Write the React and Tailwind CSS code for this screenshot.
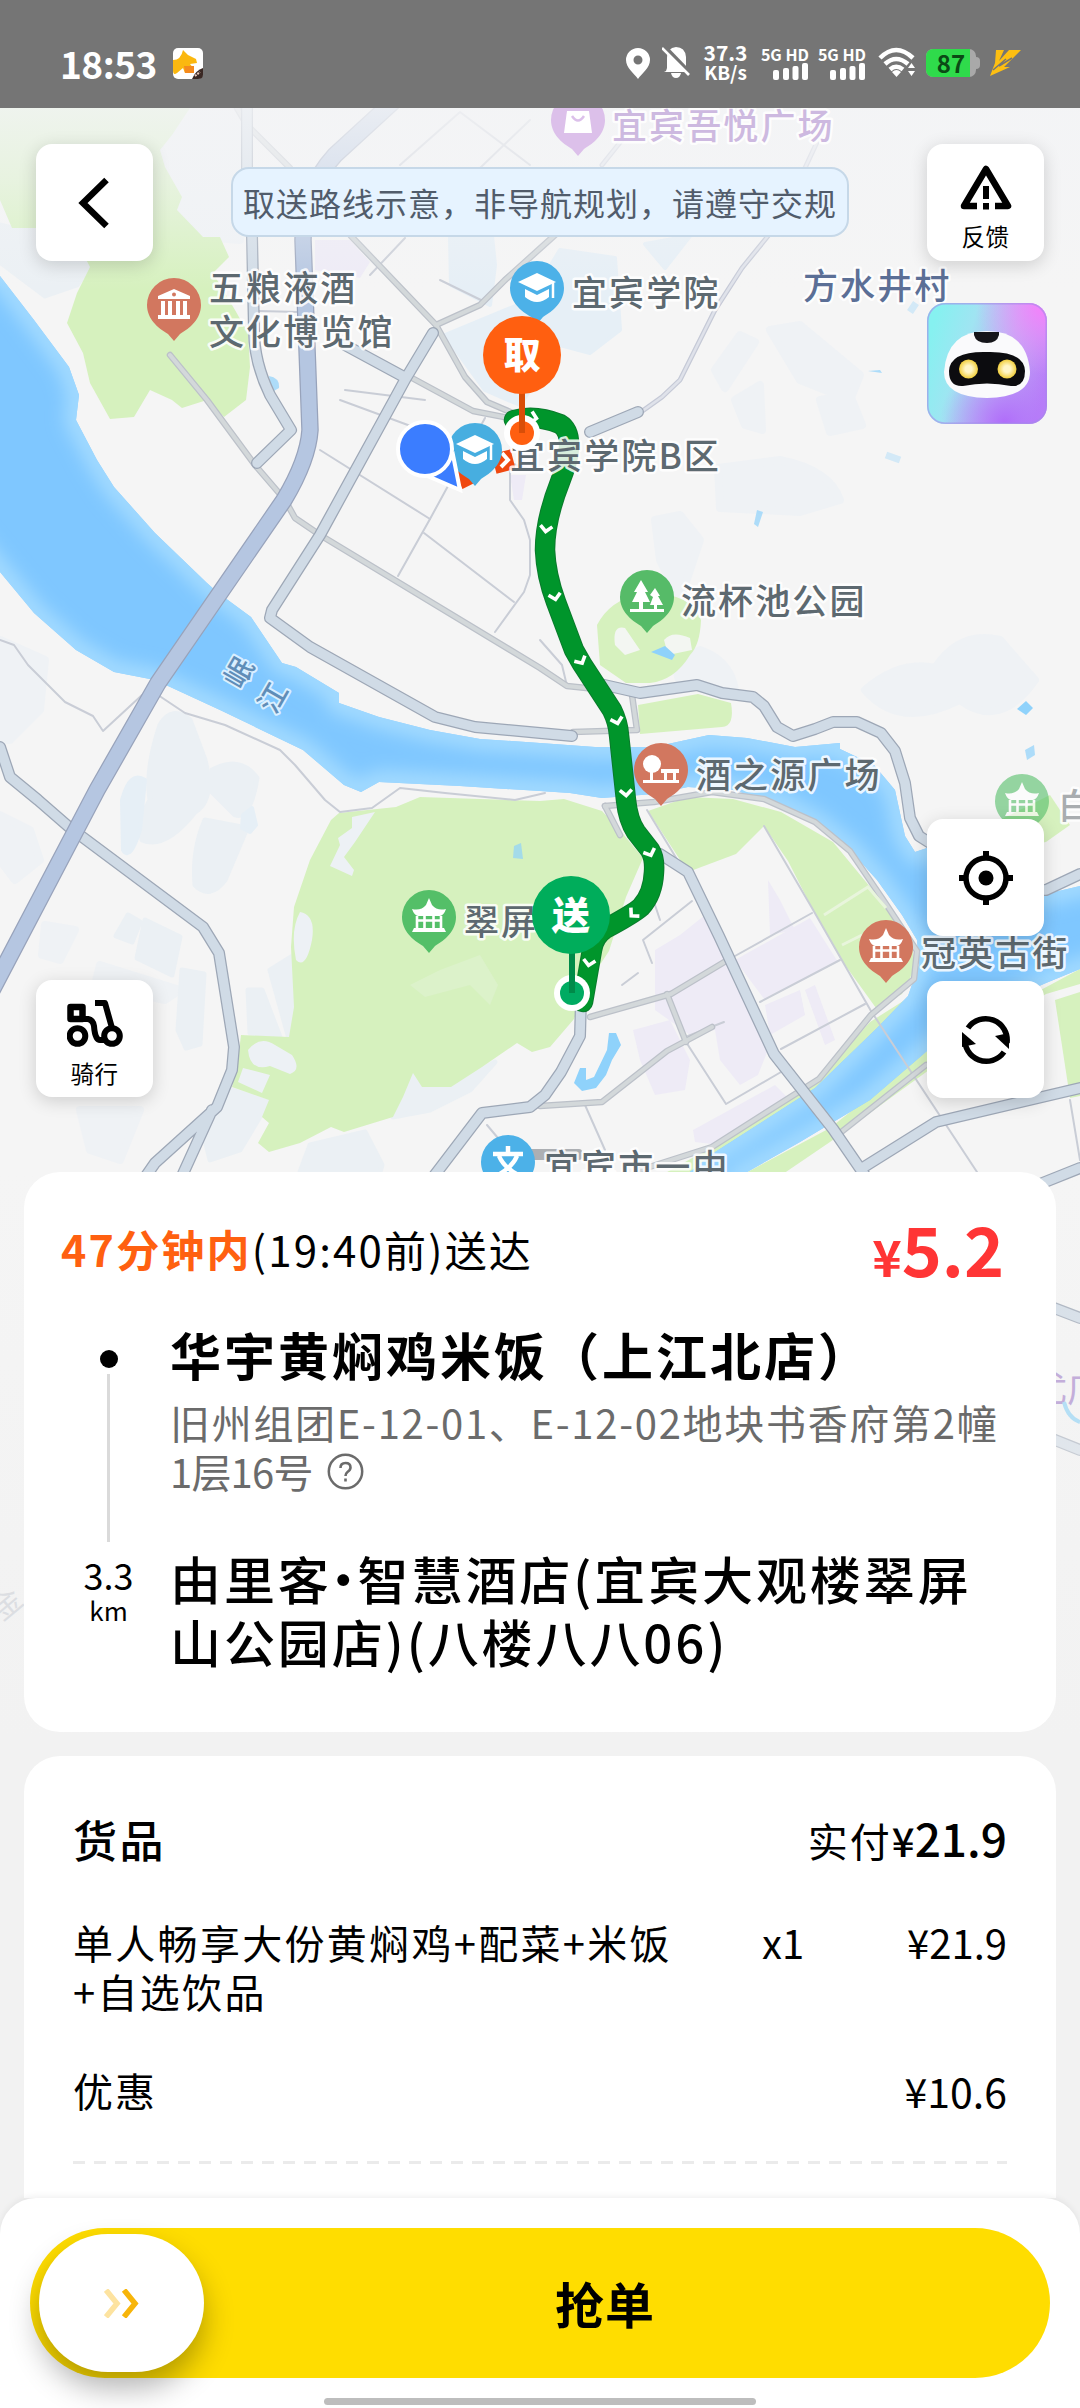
import React from 'react'

const RIVER =
  'M-60 220 L0 276 L34 320 L69 367 L79 395 L76 420 L97 460 L114 487 L155 533 L207 583 L217 592 L251 617 L282 663 L296 667 L339 693 L339 703 L379 717 L430 730 L480 739 L540 743 L595 747 L654 747 L709 735 L747 738 L795 747 L840 743 L840 749 L874 765 L895 790 L905 836 L915 852 L930 847 L985 885 L1046 894 L1080 886 L1140 870 L1140 950 L1080 969 L1046 983 L985 1010 L927 1051 L870 1100 L800 1142 L740 1176 L700 1230 L640 1210 L685 1176 L712 1154 L815 1088 L877 1028 L908 996 L919 965 L917 940 L902 915 L877 880 L850 850 L815 822 L781 804 L733 790 L688 787 L654 794 L602 798 L570 793 L540 791 L460 786 L379 782 L361 792 L344 785 L303 750 L220 710 L155 680 L114 672 L76 650 L34 613 L0 572 L-60 500 Z'

const ROUTE =
  'M514 420 Q535 414 560 424 Q570 430 569 448 Q568 462 560 482 Q545 520 545 550 Q546 575 556 602 L574 650 L582 664 L612 710 Q618 722 619 735 L626 800 Q628 820 636 832 L650 850 Q655 858 654 872 Q653 894 641 907 Q633 914 605 929 Q594 936 592 950 L583 1002'

const BLUE_ROAD = 'M395 100 L335 155 Q303 190 303 240 L310 430 Q308 460 284 500 L158 683 L97 790 L-10 994'

const greens = [
  'M0 108 L190 108 L172 135 L160 150 L165 167 L182 197 L177 210 L203 237 L220 237 L229 257 L213 273 L235 310 L248 333 L250 367 L246 400 L224 417 L207 400 L182 408 L172 400 L150 390 L134 417 L110 419 L90 383 L83 353 L67 323 L77 293 L90 267 L70 228 L12 228 L0 200 Z',
  'M339 813 L396 807 L420 797 L540 801 L564 799 L602 811 L619 829 L643 858 L626 897 L609 951 L588 983 L574 1019 L550 1047 L532 1052 L517 1043 L482 1067 L451 1087 L422 1087 L413 1073 L403 1097 L393 1117 L344 1132 L331 1127 L300 1143 L269 1152 L258 1143 L269 1123 L262 1117 L269 1100 L232 1087 L238 1060 L241 1035 L289 1037 L294 1007 L291 947 L294 907 L310 860 L331 820 Z',
  'M648 811 L688 797 L733 799 L781 812 L833 842 L871 888 L912 944 L915 968 L902 994 L876 1008 L840 958 L812 908 L788 861 L764 826 L736 854 L688 872 Z',
  'M638 705 L698 694 L731 703 Q735 726 722 727 L640 734 Z',
  'M600 665 L597 625 Q610 600 640 594 Q690 590 701 620 Q700 645 690 655 Q675 680 650 683 L626 683 Z',
  'M870 1022 L908 998 L874 1036 L815 1092 L712 1157 L685 1176 L660 1176 L712 1147 L815 1082 Z',
  'M740 1176 L830 1128 L927 1051 L1080 969 L1080 984 L1046 994 L940 1062 L830 1142 L780 1176 Z',
  'M1055 1000 L1080 992 L1080 1096 L1070 1098 Z',
  'M1000 820 L1050 795 L1070 825 L1046 842 L1000 850 Z',
]

const hazePatches = [
  'M12 228 L70 225 L90 267 L77 285 L45 296 L0 262 L0 225 Z',
  'M150 800 Q145 770 160 725 Q172 705 190 720 L205 760 Q215 800 195 812 Q165 850 142 840 Q138 820 150 800 Z',
  'M212 770 Q240 755 257 778 Q250 820 235 815 L210 790 Z',
  'M205 820 L247 828 L225 880 Q210 900 195 885 Q192 850 205 820 Z',
  'M128 915 L140 922 L132 942 L116 936 Z M145 920 L180 937 L172 975 L137 958 Z',
  'M182 970 L204 974 L200 1044 L186 1048 L178 1030 Z',
  'M248 990 L262 990 L280 1037 L250 1033 Z',
  'M270 970 L294 955 L294 1007 L288 1035 Z',
  'M232 1090 L268 1102 L258 1120 L240 1150 L210 1160 L205 1140 Z',
  'M310 1145 L365 1132 L382 1165 L380 1172 L300 1172 Z',
  'M413 1073 L422 1087 L451 1087 L495 1062 L470 1090 L430 1110 L393 1117 Z',
]

const faintPatches = [
  'M160 150 L200 108 L240 108 L240 240 L203 237 L177 210 L182 197 Z',
  'M0 640 L45 660 L40 710 L10 740 L0 740 Z',
  'M0 815 L30 830 L40 860 L15 880 L0 860 Z',
  'M45 925 L75 930 L60 960 L42 955 Z M100 965 L180 990 L165 1000 L95 985 Z',
  'M80 1110 L140 1110 L120 1160 L90 1150 Z',
  'M865 690 Q900 660 935 668 Q960 630 1000 640 L1035 680 Q1000 730 960 700 Q900 730 865 690 Z',
  'M700 650 Q730 660 735 690 L700 684 Q670 690 680 660 Z',
  'M655 520 L680 515 L700 540 L680 600 L660 560 Z',
  'M715 370 L740 335 L755 342 L725 388 Z',
  'M735 400 L760 385 L762 430 L745 425 Z',
  'M718 468 L780 460 Q830 470 840 500 L800 512 L720 508 Z',
  'M770 330 L800 325 L830 350 L860 375 L850 400 L800 380 Z',
  'M820 400 L850 395 L862 425 L830 432 Z',
]

const paleBlues = [
  'M445 335 L530 300 L560 250 L615 258 L620 330 L590 353 L560 345 L520 405 L485 390 Z',
  'M450 236 L492 236 L495 265 L490 305 L451 285 Z',
  'M645 244 L690 236 L665 268 Z',
  'M122 800 Q130 770 145 780 L140 830 Q130 862 123 850 Z',
  'M243 815 L252 808 L256 825 L250 832 L242 828 Z',
]

const lilacs = [
  'M315 240 L350 240 L370 262 L360 278 L315 270 Z',
  'M510 475 L526 475 L522 500 L514 500 Z',
  'M655 950 L680 935 L705 915 L722 950 L735 985 L760 1010 L770 1045 L758 1075 L740 1085 L720 1060 L715 1030 L690 1035 L655 1010 Z',
  'M735 960 L810 918 L838 962 L765 1000 Z',
  'M768 880 L780 900 L795 930 L770 935 Z',
  'M633 1030 L670 1020 L690 1060 L685 1090 L655 1095 L640 1060 Z',
  'M693 1130 L775 1085 L790 1100 L720 1145 L695 1142 Z',
  'M765 1005 L800 990 L805 1015 L770 1035 Z',
  'M805 990 L815 985 L835 1040 L825 1045 Z',
]

const lanes = [
  'M237 108 L247 125 L290 168',
  'M351 236 L436 325 L465 377 L487 402 L515 414',
  'M436 325 L480 305 L505 280 L555 235',
  'M412 378 L473 411 L514 419',
  'M170 355 L207 400 L255 465 L285 500 L295 518 L320 535 L540 668 L567 686 L605 690',
  'M573 732 L637 730 L632 695',
  'M605 806 L654 802 L712 792 L764 799 L815 822 L850 851 L884 901 L917 951 L914 979 L871 1015 L819 1079 L712 1147 L640 1170',
  'M605 806 L620 835',
  'M840 1133 L926 1065',
  'M540 1106 L602 1102 L667 1051 L712 1027',
  'M667 994 L686 1042',
  'M590 1017 L671 994 L726 961',
]

const paths = [
  'M258 311 L300 312',
  'M370 275 L405 238 M400 165 L460 112 L530 165 M480 168 L530 120',
  'M440 280 L485 302',
  'M340 400 L530 470 M320 450 L430 519 M425 400 L345 390',
  'M485 418 L430 519 L398 576',
  'M510 470 L510 500 L524 520 L530 540 L530 575 L524 592 L495 632',
  'M424 533 L514 602',
  'M540 640 L562 665 L567 686',
  'M647 810 L678 861 M735 956 L812 913 M760 1002 L840 960 M781 1049 L865 1004',
  'M764 826 L812 908 L871 1011 L977 1172',
  'M686 1042 L726 1104 L781 1072 M688 1036 L724 1022',
  'M652 963 L643 940 L692 901 M655 905 L660 920 M622 985 L638 973',
  'M0 640 L14 645 L28 665 L65 702 L93 716 L103 731 L142 695 L155 693 L185 713 L225 725 L280 750 L295 765 L325 800 L340 812 L372 808 L400 788 L445 793 L515 800 L545 793',
  'M585 1105 L605 1150 M487 1125 L508 1150 M1070 1100 L1080 1160',
]

const tracks = [
  'M768 236 L742 268 L715 310 L680 380 L662 397 L641 412',
  'M805 168 L818 140 M602 165 L622 140',
]

const avenues = [
  'M247 108 L247 168 L252 236 L254 330 Q254 362 270 395 L291 430 L257 463',
  'M345 345 L406 378 M433 333 L406 378 L394 400 L320 535 L272 610 L270 618 L310 647 L435 717 L475 727 L540 733 L572 736',
  'M600 684 L640 693 L697 685 L722 693 L753 697 L764 706 L777 727 L793 736 L815 729 L833 722 L857 722 L881 733 L895 751 L905 783 L910 818 L919 836 L960 862 L1010 890 L1046 890 L1080 874',
  'M0 747 L10 777 L38 800 L69 827 L203 927 L219 953 L234 1047 L232 1070 L217 1107 L155 1163 L146 1176 M212 1110 L182 1176',
  'M434 1176 L482 1113 L530 1107 L545 1095 L561 1072 L580 1036 L581 1000',
  'M660 854 L688 872 L719 936 L774 1054 L833 1129 L868 1180',
  'M864 1167 L936 1122 L1080 1088',
  'M1040 1184 L1080 1168',
  'M590 432 L638 412',
  'M1020 1295 L1080 1318 M1030 1430 L1080 1450',
]

const routeMarks = [
  [546, 529, 8], [555, 597, -12], [581, 661, -28], [617, 721, -15], [626, 793, -4],
  [650, 853, -22], [633, 914, 45], [589, 963, 10], [534, 418, -80],
]

const SchoolGlyph = () => (
  <>
    <path d="M0 -15 L19 -6 L0 3 L-19 -6 Z" />
    <path d="M-12 1 L0 7 L12 1 V9 Q0 19 -12 9 Z" />
    <path d="M16 -5 V10" stroke="#fff" strokeWidth="2.5" />
  </>
)

const PagodaGlyph = () => (
  <>
    <path d="M0 -19 L3 -12 Q8 -6 17 -8 Q15 -2 11 -1 H-11 Q-15 -2 -17 -8 Q-8 -6 -3 -12 Z" />
    <path d="M-16 15 V11 L-12 11 V-1 M16 15 V11 L12 11 V-1" fill="none" />
    <path d="M-12 -1 V12 M12 -1 V12 M-4.500 -1 V12 M4.500 -1 V12 M-12 3.500 H12" fill="none" stroke="#fff" strokeWidth="2.6" />
    <path d="M-15 11 H15 L17 15 H-17 Z" />
  </>
)

const MuseumGlyph = () => (
  <>
    <path d="M0 -16 L16 -9 V-6 H-16 V-9 Z M-13 -4 H-9 V10 H-13 Z M-6 -4 H-2 V10 H-6 Z M2 -4 H6 V10 H2 Z M9 -4 H13 V10 H9 Z M-16 10 H16 V14 H-16 Z" />
    <circle cx="0" cy="-10.500" r="2" fill="#d2775f" />
  </>
)

const TreesGlyph = () => (
  <>
    <path d="M-6 -17 L1 -5 H-2 L3 5 H-4 V12 H-8 V5 H-15 L-10 -5 H-13 Z" />
    <path d="M8 -9 L13 -1 H11 L16 8 H10 V12 H7 V8 H3 L6 0 L3 -2 Z M-17 12 H17 V15 H-17 Z" />
  </>
)

const PlazaGlyph = () => (
  <>
    <circle cx="-9" cy="-6" r="9" />
    <path d="M-11 0 H-8 V12 H-11 Z M-18 10 H18 V13 H-18 Z M0 -1 H18 V3 H0 Z M3 3 H6 V10 H3 Z M12 3 H15 V10 H12 Z" />
  </>
)

const BagGlyph = () => (
  <>
    <path d="M-11 -9 H11 L14 13 H-14 Z" />
    <path d="M-6 -4 Q0 5 6 -4" fill="none" stroke="#dcc0ea" strokeWidth="2.5" />
  </>
)

const WenGlyph = () => (
  <path d="M0 -16 V-9 M-15 -8 H15 M-9 -6 Q-4 6 12 14 M9 -6 Q4 6 -12 14" fill="none" stroke="#fff" strokeWidth="4.500" />
)

const pois = [
  { x: 174, y: 305, color: '#d2775f', Glyph: MuseumGlyph },
  { x: 537, y: 288, color: '#4cb1e8', Glyph: SchoolGlyph },
  { x: 475, y: 450, color: '#47aee0', Glyph: SchoolGlyph },
  { x: 647, y: 597, color: '#56bb68', Glyph: TreesGlyph },
  { x: 661, y: 770, color: '#d2775f', Glyph: PlazaGlyph },
  { x: 886, y: 947, color: '#d2775f', Glyph: PagodaGlyph },
  { x: 429, y: 917, color: '#54bf68', Glyph: PagodaGlyph },
  { x: 1022, y: 801, color: '#54bf68', Glyph: PagodaGlyph, opacity: 0.6 },
  { x: 508, y: 1162, color: '#4cb1e8', Glyph: WenGlyph },
  { x: 578, y: 120, color: '#dcc0ea', Glyph: BagGlyph },
]

const labels = [
  { x: 209, y: 301, text: '五粮液酒' },
  { x: 209, y: 345, text: '文化博览馆' },
  { x: 572, y: 306, text: '宜宾学院' },
  { x: 510, y: 469, text: '宜宾学院B区' },
  { x: 681, y: 614, text: '流杯池公园' },
  { x: 696, y: 788, text: '酒之源广场' },
  { x: 921, y: 966, text: '冠英古街' },
  { x: 464, y: 935, text: '翠屏' },
  { x: 544, y: 1180, text: '宜宾市一中' },
  { x: 1058, y: 819, text: '白', fill: '#a9adb0' },
  { x: 803, y: 299, text: '方水井村', fill: '#5b6f96' },
  { x: 612, y: 139, text: '宜宾吾悦广场', fill: '#cdb9e0' },
]

const MapCanvas = () => (
  <svg className="absolute inset-0 font-['Noto_Sans_CJK_SC',sans-serif]" width="1080" height="1760" viewBox="0 0 1080 1760">
    <defs>
      <linearGradient id="topFade" x1="0" y1="108" x2="0" y2="290" gradientUnits="userSpaceOnUse">
        <stop offset="0" stopColor="#f3f4f6" stopOpacity="0.85" />
        <stop offset="0.4" stopColor="#f3f4f6" stopOpacity="0.6" />
        <stop offset="1" stopColor="#f3f4f6" stopOpacity="0" />
      </linearGradient>
      <linearGradient id="bottomFade" x1="0" y1="1172" x2="0" y2="1740" gradientUnits="userSpaceOnUse">
        <stop offset="0" stopColor="#f2f2f2" stopOpacity="0" />
        <stop offset="1" stopColor="#f2f2f2" />
      </linearGradient>
      <clipPath id="riverClip">
        <path d={RIVER} />
      </clipPath>
      <filter id="soft" x="-10%" y="-10%" width="120%" height="120%">
        <feGaussianBlur stdDeviation="9" />
      </filter>
    </defs>
    <rect width="1080" height="1760" fill="#f5f5f5" />
    {faintPatches.map((d) => <path key={d} d={d} fill="#eff2f5" stroke="#eff2f5" strokeWidth="8" strokeLinejoin="round" />)}
    {hazePatches.map((d) => <path key={d} d={d} fill="#ebf0f4" stroke="#ebf0f4" strokeWidth="5" strokeLinejoin="round" />)}
    {paleBlues.map((d) => <path key={d} d={d} fill="#e6eff6" stroke="#e6eff6" strokeWidth="4" strokeLinejoin="round" />)}
    {lilacs.map((d) => <path key={d} d={d} fill="#eeebf6" />)}
    {greens.map((d) => <path key={d} d={d} fill="#d6f1be" />)}
    <path d="M352 817 L375 812 L355 842 L344 857 L354 870 L352 876 L330 866 L340 845 L338 838 L352 828 Z" fill="#edf1f5" />
    <path d="M300 912 Q316 915 312 940 Q306 970 296 960 Q290 930 300 912 Z M248 1050 Q260 1035 275 1045 L292 1055 Q302 1070 290 1074 L270 1066 Q250 1072 248 1050 Z M243 1068 L270 1075 L262 1093 L238 1082 Z" fill="#edf1f5" />
    <path d="M410 985 L440 970 L480 955 L498 985 L490 1005 L470 985 L425 997 Z" fill="#dcf2ca" />
    <path d="M615 645 Q612 625 625 628 L640 650 L625 655 Z M664 640 Q672 630 690 638 L692 650 L668 655 Z" fill="#f3f6f2" />
    <path d={RIVER} fill="#7fc7ff" />
    <g clipPath="url(#riverClip)">
      <path d={RIVER} filter="url(#soft)" fill="none" stroke="#a5dcff" strokeWidth="22" />
    </g>
    <g fill="#8fd2fb">
      <path d="M609 1033 L616 1033 L621 1045 L612 1060 L606 1075 L596 1088 L582 1091 L574 1083 L580 1068 L586 1068 L586 1080 L594 1077 L607 1050 Z" />
      <path d="M651 652 L665 646 L675 655 L672 660 Z M1017 709 L1026 701 L1033 708 L1026 715 Z" />
      <path d="M1025 750 L1034 745 L1035 755 L1027 760 Z M514 846 L521 843 L523 859 L513 858 Z M269 376 Q280 378 279 388 L272 392 Z M868 371 L880 370 L882 373 Z M757 510 L763 512 L758 527 L754 524 Z" opacity="0.7" />
      <path d="M886 455 L900 460 M910 312 L916 303" stroke="#d3e9f7" strokeWidth="7" />
    </g>
    <g fill="none" strokeLinejoin="round" strokeLinecap="round">
      {paths.map((d) => <path key={d} d={d} stroke="#c9cdd6" strokeWidth="2" />)}
      {tracks.map((d) => <path key={d} d={d} stroke="#c5c9d6" strokeWidth="5" />)}
      {tracks.map((d) => <path key={d} d={d} stroke="#dfe2ea" strokeWidth="2.5" />)}
      {lanes.map((d) => <path key={d} d={d} stroke="#bcc1c9" strokeWidth="6.5" />)}
      {lanes.map((d) => <path key={d} d={d} stroke="#d3d8da" strokeWidth="4" />)}
      {avenues.map((d) => <path key={d} d={d} stroke="#9da7b6" strokeWidth="12" />)}
      {avenues.map((d) => <path key={d} d={d} stroke="#d0dbe6" strokeWidth="9.5" />)}
      <path d={BLUE_ROAD} stroke="#98a3bb" strokeWidth="17.500" />
      <path d={BLUE_ROAD} stroke="#b5c6e1" strokeWidth="15" />
    </g>
    <path d="M824 915 L868 887 L886 908 M842 945 L862 935" stroke="#e8f5dc" strokeWidth="3" fill="none" />
    <rect x="500" y="1149" width="82" height="11" rx="3" fill="#7b8087" opacity="0.6" />
    <rect x="0" y="108" width="1080" height="190" fill="url(#topFade)" />
    <rect x="0" y="1172" width="1080" height="588" fill="url(#bottomFade)" />
    <text transform="translate(2 1622) rotate(-40)" fontSize="30" fill="#dcdee2">金</text>
    <text x="1031" y="1402" fontSize="36" fill="#c3aeda">尤广</text>
    <path d="M1064 1402 Q1068 1418 1080 1422" stroke="#b5dff5" strokeWidth="4" fill="none" />

    {/* rider to shop leg */}
    <path d="M458 480 L470 474 M494 464 L513 459" stroke="#f0480f" strokeWidth="20" />
    <path d="M502 453 L508 460 L501 467" stroke="#fff" strokeWidth="4" fill="none" />

    {/* shop to customer leg */}
    <path d={ROUTE} fill="none" stroke="#0a7a2c" strokeWidth="20.5" strokeLinejoin="round" strokeLinecap="round" />
    <path d={ROUTE} fill="none" stroke="#00952b" strokeWidth="18.5" strokeLinejoin="round" strokeLinecap="round" />
    {routeMarks.map(([x, y, r]) => (
      <path key={y} transform={`translate(${x} ${y}) rotate(${r})`} d="M-6 -3 L0 2.5 L6 -3" fill="none" stroke="#fff" strokeWidth="3.6" />
    ))}

    {pois.map(({ x, y, color, Glyph, opacity = 1 }) => (
      <g key={`${x}-${y}`} transform={`translate(${x} ${y})`} opacity={opacity}>
        <path d="M-27 0 A27 27 0 1 1 27 0 C27 14 16 23 6 29 L0 36 L-6 29 C-16 23 -27 14 -27 0 Z" fill={color} />
        <g fill="#fff"><Glyph /></g>
      </g>
    ))}

    <g fontSize="35" fontWeight="500" letterSpacing="2.1" stroke="#fff" strokeWidth="5" strokeLinejoin="round" paintOrder="stroke">
      {labels.map(({ x, y, text, fill = '#5d6970' }) => (
        <text key={text} x={x} y={y} fill={fill} strokeOpacity="0.85">{text}</text>
      ))}
      <g fontSize="29" letterSpacing="0" fill="#5f8db8" stroke="#d9efff" strokeWidth="4" textAnchor="middle">
        <text transform="translate(248 678) rotate(-60)">岷</text>
        <text transform="translate(282 703) rotate(-60)">江</text>
      </g>
    </g>

    {/* rider */}
    <g fill="#3b7dff" stroke="#fff" strokeWidth="4">
      <path d="M430 477 L453 455 L460 490 Z" />
      <circle cx="425" cy="449" r="27" />
    </g>

    {/* pickup pin */}
    <circle cx="522" cy="433" r="18" fill="#fff" />
    <circle cx="522" cy="433" r="12" fill="#ff5f10" />
    <path d="M522 390 V433" stroke="#d94e08" strokeWidth="6" />
    <circle cx="522" cy="355" r="39" fill="#ff5f10" />
    <text x="522" y="369" fontSize="37" fontWeight="900" fill="#fff" textAnchor="middle">取</text>

    {/* delivery pin */}
    <circle cx="572" cy="993" r="18" fill="#fff" />
    <circle cx="572" cy="993" r="12" fill="#00ab62" />
    <path d="M572 950 V993" stroke="#008a49" strokeWidth="6" />
    <circle cx="571" cy="915" r="39" fill="#00ad5b" />
    <text x="571" y="929" fontSize="38" fontWeight="900" fill="#fff" textAnchor="middle">送</text>
  </svg>
)

const Signal = () => (
  <div className="flex w-12 flex-col items-end">
    <span className="text-[16px] font-bold leading-[18px] whitespace-nowrap">5G HD</span>
    <svg width="36" height="17" viewBox="0 0 36 17" fill="#fff">
      <rect x="0" y="7" width="6" height="10" rx="2" />
      <rect x="10" y="5" width="6" height="12" rx="2" />
      <rect x="19.500" y="3" width="6" height="14" rx="2" />
      <rect x="29" y="0" width="6" height="17" rx="2" />
    </svg>
  </div>
)

const StatusBar = () => (
  <header className="relative flex h-[108px] shrink-0 items-start justify-between bg-[#757575] pt-[43px] pr-[59px] pl-[60px] text-white">
    <div className="flex items-center">
      <span className="w-[113px] text-[37px] leading-[40px] font-bold tracking-[-0.5px]">18:53</span>
      <svg width="30" height="31" viewBox="0 0 30 31">
        <rect width="30" height="31" rx="5" fill="#fff" />
        <path d="M0 12 Q8 12 10 2 L15 7 L23 11 L24 15 L17 16 L21 21 L20 25 H12 L10 20 L4 25 Q0 28 0 22 Z" fill="#fbb80f" />
        <path d="M11 18 H21 V25 H12 Z" fill="#f58a1d" />
        <path d="M30 20 V27 Q30 31 25 31 H19 Q23 22 30 20 Z" fill="#3a2824" />
        <path d="M22 28 L27 24" stroke="#e9c7b8" strokeWidth="2" strokeDasharray="2 1" />
      </svg>
    </div>
    <div className="flex items-center">
      <svg width="24" height="31" viewBox="0 0 24 31" className="mt-[1px]">
        <path fillRule="evenodd" d="M12 0 A12 12 0 0 1 24 12 C24 20 16 25 12 31 C8 25 0 20 0 12 A12 12 0 0 1 12 0 Z M12 7.500 A4.500 4.500 0 1 0 12 16.500 A4.500 4.500 0 1 0 12 7.500 Z" fill="#fff" />
      </svg>
      <svg width="28" height="31" viewBox="0 0 28 31" className="ml-3">
        <path d="M4 24 L5 21 V11 Q5 1 14 0 Q23 0 24 10 V21 L26 25 H2 Z M9 26 H19 Q18 31 14 31 Q10 31 9 26 Z" fill="#fff" />
        <path d="M2 -1 L29 27" stroke="#757575" strokeWidth="4" />
        <path d="M0 1 L27 28" stroke="#fff" strokeWidth="2.6" />
      </svg>
      <div className="ml-3.5 flex w-[43px] flex-col items-center text-[21px] leading-[19px] font-bold">
        <span>37.3</span>
        <span className="text-[19px] leading-[20px]">KB/s</span>
      </div>
      <div className="ml-3.5 flex gap-[9px]">
        <Signal />
        <Signal />
      </div>
      <svg width="38" height="31" viewBox="0 0 38 31" className="ml-3" fill="none" stroke="#fff" strokeWidth="4.500">
        <path d="M2 11 Q18 -5 35 11 M7 17 Q18 7 30 17 M12 22.500 Q18 17 25 22.500" />
        <path d="M18.500 30 L14 25 Q18.500 21 23 25 Z" fill="#fff" stroke="none" />
        <path d="M30 21 L33.500 16 L37 21 Z M30 24 L33.500 29 L37 24 Z" fill="#fff" stroke="none" />
      </svg>
      <div className="ml-2.5 flex items-center">
        <div className="flex h-[28px] w-[50px] items-center rounded-[7px] bg-[#a9a9a9]">
          <div className="flex h-[28px] w-[44px] items-center justify-center rounded-l-[7px] bg-[#2fdb4b] pl-1.5 text-[24px] leading-none font-bold text-[#0b4a15]">87</div>
        </div>
        <div className="h-3 w-1 rounded-r-sm bg-[#a9a9a9]" />
      </div>
      <svg width="31" height="26" viewBox="0 0 31 26" className="ml-2.5" fill="#fdbf12">
        <path d="M6 0 H14 L9 11 L19 0 H31 L14 17 H20 L0 26 L5 13 Z" />
        <path d="M3 20 L16 9 M9 16 L22 8" stroke="#757575" strokeWidth="1.500" />
      </svg>
    </div>
  </header>
)

const MapButton = ({ children }) => (
  <button className="flex h-[117px] w-[117px] flex-col items-center justify-center rounded-2xl bg-white text-black shadow-[0_4px_18px_rgba(0,0,0,0.16)]">
    {children}
  </button>
)

const ButtonLabel = ({ children }) => (
  <span className="mt-[11px] mb-[-10px] text-[23.5px] leading-[30px] tracking-[0.5px]">{children}</span>
)

const BackIcon = () => (
  <svg width="34" height="54" viewBox="0 0 34 54" className="mr-1">
    <path d="M30.500 4 L7 27 L30.500 50" fill="none" stroke="#000" strokeWidth="6.500" />
  </svg>
)

const ScooterIcon = () => (
  <svg width="56" height="48" viewBox="0 0 56 48" fill="none" stroke="#000" strokeWidth="6">
    <rect x="3.500" y="8" width="12" height="12" strokeWidth="6.500" strokeLinejoin="round" />
    <circle cx="10.500" cy="37" r="7.800" />
    <circle cx="45" cy="37" r="7.800" />
    <path d="M16 20 H21 Q26 21 27 27 Q28 41 33 41 H38" strokeLinejoin="round" />
    <path d="M28 4 H38 L45 29" strokeLinejoin="round" />
  </svg>
)

const WarningIcon = () => (
  <svg width="52" height="45" viewBox="0 0 52 45" fill="none" stroke="#000" strokeWidth="6.500" strokeLinejoin="round">
    <path d="M17 41 H4 L26 4 L48 41 H35" strokeLinecap="butt" />
    <path d="M26 21 V34 M26 38 V44.500" strokeWidth="6" />
  </svg>
)

const LocateIcon = () => (
  <svg width="54" height="54" viewBox="0 0 54 54" fill="none" stroke="#000">
    <circle cx="27" cy="27" r="20" strokeWidth="5.500" />
    <circle cx="27" cy="27" r="7.500" fill="#000" stroke="none" />
    <path d="M27 0 V8 M27 46 V54 M0 27 H8 M46 27 H54" strokeWidth="6" />
  </svg>
)

const RefreshIcon = () => (
  <svg width="50" height="50" viewBox="0 0 50 50">
    <path d="M7 13 A21.500 21.500 0 0 1 46 28" fill="none" stroke="#000" strokeWidth="5.500" />
    <path d="M43 37 A21.500 21.500 0 0 1 4 22" fill="none" stroke="#000" strokeWidth="5.500" />
    <path d="M34 21 L48 18 L48 34 Z" />
    <path d="M15 29 L1 17 L1 32 Z" />
  </svg>
)

const RobotButton = () => (
  <button className="mt-[42px] h-[120px] w-[117px]">
    <svg width="120" height="121" viewBox="0 0 120 121">
      <defs>
        <linearGradient id="bot" x1="0" y1="0.350" x2="1" y2="0.650">
          <stop offset="0" stopColor="#86f1f0" />
          <stop offset="0.300" stopColor="#a0e4f2" />
          <stop offset="0.650" stopColor="#bfaaf5" />
          <stop offset="1" stopColor="#b97bf8" />
        </linearGradient>
        <radialGradient id="botPink" cx="1" cy="0" r="0.600">
          <stop offset="0" stopColor="#fb7cfc" />
          <stop offset="1" stopColor="#e9a0f8" stopOpacity="0" />
        </radialGradient>
        <radialGradient id="botViolet" cx="0.650" cy="1" r="0.550">
          <stop offset="0" stopColor="#b06cfa" />
          <stop offset="1" stopColor="#b48cf8" stopOpacity="0" />
        </radialGradient>
        <radialGradient id="eye">
          <stop offset="0.350" stopColor="#fff6c8" />
          <stop offset="1" stopColor="#f2cf3c" />
        </radialGradient>
      </defs>
      <rect width="120" height="121" rx="18" fill="url(#bot)" />
      <rect width="120" height="121" rx="18" fill="url(#botPink)" />
      <rect x="0.750" y="0.750" width="118.500" height="119.500" rx="17.500" fill="url(#botViolet)" stroke="#a58bea" strokeOpacity="0.600" strokeWidth="1.500" />
      <path d="M17 69 Q20 28 60 28 Q100 28 103 69 Q103 94 60 95 Q17 94 17 69 Z" fill="#fafafc" />
      <path d="M47 29 H72 V32 Q70 40 60 40 Q49 40 47 32 Z" fill="#15151a" />
      <path d="M60 49 Q97 48 98 68 Q98 84 84 83 Q60 78 36 83 Q22 84 22 68 Q23 48 60 49 Z" fill="#0c0c0f" />
      <circle cx="41.500" cy="66" r="9.500" fill="url(#eye)" />
      <circle cx="80" cy="66" r="9.500" fill="url(#eye)" />
    </svg>
  </button>
)

const OrderCard = () => (
  <section className="h-[560px] rounded-[36px] bg-white pt-[36px] pr-[52px] pl-9">
    <div className="flex h-[80px] items-center justify-between">
      <h2 className="pl-[1px] text-[42px] tracking-[2.2px] text-black">
        <b className="text-[43px] text-[#ff6010]">47分钟内</b>
        (19:40前)送达
      </h2>
      <div className="flex items-baseline font-bold text-[#ff3535]">
        <span className="text-[50px] leading-none">¥</span>
        <span className="text-[68px] leading-none">5.2</span>
      </div>
    </div>
    <div className="mt-[35px] flex">
      <div className="flex w-[97px] shrink-0 flex-col items-center pt-[27px]">
        <div className="size-[18px] rounded-full bg-black" />
        <div className="mt-1.5 h-[168px] w-[3px] bg-[#dadada]" />
        <span className="mt-[14px] text-[36px] leading-[36px]">3.3</span>
        <span className="mt-[2px] text-[26px] leading-[32px]">km</span>
      </div>
      <div className="pl-[13px] text-black">
        <h1 className="mt-[-3px] h-[78px] text-[51px] leading-[68px] font-bold tracking-[3px] whitespace-nowrap">华宇黄焖鸡米饭（上江北店）</h1>
        <div className="text-[40px] leading-[49px] tracking-[1.7px] whitespace-nowrap text-[#6b6b6b]">
          <p>旧州组团E-12-01、E-12-02地块书香府第2幢</p>
          <p className="flex items-center tracking-[-0.8px]">
            1层16号
            <svg className="ml-3.5" width="37" height="37" viewBox="0 0 37 37" fill="none" stroke="#6b6b6b">
              <circle cx="18.500" cy="18.500" r="16.700" strokeWidth="2.500" />
              <path d="M13.500 15 Q13.500 10 18.500 10 Q23.500 10 23.500 14.500 Q23.500 17 20.500 19 Q18.500 20.500 18.500 23 M18.500 25.500 V28.500" strokeWidth="2.600" />
            </svg>
          </p>
        </div>
        <div className="mt-[51px] text-[51px] leading-[63px] font-medium tracking-[2.900px] whitespace-nowrap">
          <p>
            由里客<span className="mx-[-14px]">·</span>智慧酒店(宜宾大观楼翠屏
          </p>
          <p>山公园店)(八楼八八06)</p>
        </div>
      </div>
    </div>
  </section>
)

const GoodsCard = () => (
  <section className="mt-6 h-[500px] rounded-t-[36px] bg-white px-[49px] pt-[52px] text-[40px] leading-[49px] text-black">
    <div className="flex h-[62px] items-center justify-between">
      <span className="text-[44px] font-medium tracking-[2.500px]">货品</span>
      <span className="flex items-baseline">
        <span className="tracking-[2px]">实付</span>
        <span className="font-medium">¥</span>
        <span className="text-[46px] font-medium">21.9</span>
      </span>
    </div>
    <div className="mt-[48px] flex">
      <p className="w-[689px] tracking-[2.300px] whitespace-nowrap">
        单人畅享大份黄焖鸡+配菜+米饭
        <br />
        +自选饮品
      </p>
      <span>x1</span>
      <span className="ml-auto">¥21.9</span>
    </div>
    <div className="mt-[50px] flex justify-between">
      <span className="tracking-[2px]">优惠</span>
      <span className="text-[41px]">¥10.6</span>
    </div>
    <div className="mt-[46px] h-[3px] bg-[repeating-linear-gradient(90deg,#ebebeb_0_12px,transparent_12px_21px)]" />
  </section>
)

const GrabBar = () => (
  <footer className="relative flex h-[210px] shrink-0 flex-col items-center rounded-t-[36px] bg-white pt-[30px] shadow-[0_-2px_6px_rgba(0,0,0,0.06)]">
    <div className="flex h-[150px] w-[1020px] items-center rounded-full bg-[#ffdd00] pl-[9px]">
      <div className="flex h-[138px] w-[165px] items-center justify-center rounded-full bg-white shadow-[0_16px_30px_rgba(0,0,0,0.3)]">
        <svg width="36" height="29" viewBox="0 0 36 29" fill="none" strokeWidth="5.500">
          <path d="M2 1 L13 14.500 L2 28" stroke="#fde3a0" />
          <path d="M20 1 L31 14.500 L20 28" stroke="#f7b50a" />
        </svg>
      </div>
      <span className="flex-1 pr-[44px] text-center text-[49px] font-bold tracking-[1px] text-black">抢单</span>
    </div>
    <div className="mt-5 h-[7px] w-[432px] rounded-full bg-[#bdbdbd]" />
  </footer>
)

export default function App() {
  return (
    <div className="relative flex h-[2408px] w-[1080px] flex-col overflow-hidden bg-[#f2f2f2] font-['Noto_Sans_CJK_SC',sans-serif]">
      <MapCanvas />
      <StatusBar />
      <div className="relative flex h-[1064px] shrink-0 items-start justify-between pt-9 pr-9 pl-9">
        <div className="flex h-[953px] flex-col justify-between">
          <MapButton><BackIcon /></MapButton>
          <MapButton>
            <ScooterIcon />
            <ButtonLabel>骑行</ButtonLabel>
          </MapButton>
        </div>
        <div className="mt-[23px] flex h-[70px] w-[618px] items-center justify-center rounded-[18px] border-2 border-[#c6d8e8] bg-[#e6f3ff] text-[32px] tracking-[1px] whitespace-nowrap text-[#515c6b]">
          取送路线示意，非导航规划，请遵守交规
        </div>
        <div className="flex h-[954px] flex-col">
          <MapButton>
            <WarningIcon />
            <ButtonLabel>反馈</ButtonLabel>
          </MapButton>
          <RobotButton />
          <div className="mt-auto flex flex-col gap-[45px]">
            <MapButton><LocateIcon /></MapButton>
            <MapButton><RefreshIcon /></MapButton>
          </div>
        </div>
      </div>
      <main className="relative min-h-0 flex-1 overflow-hidden px-6">
        <OrderCard />
        <GoodsCard />
      </main>
      <GrabBar />
    </div>
  )
}
